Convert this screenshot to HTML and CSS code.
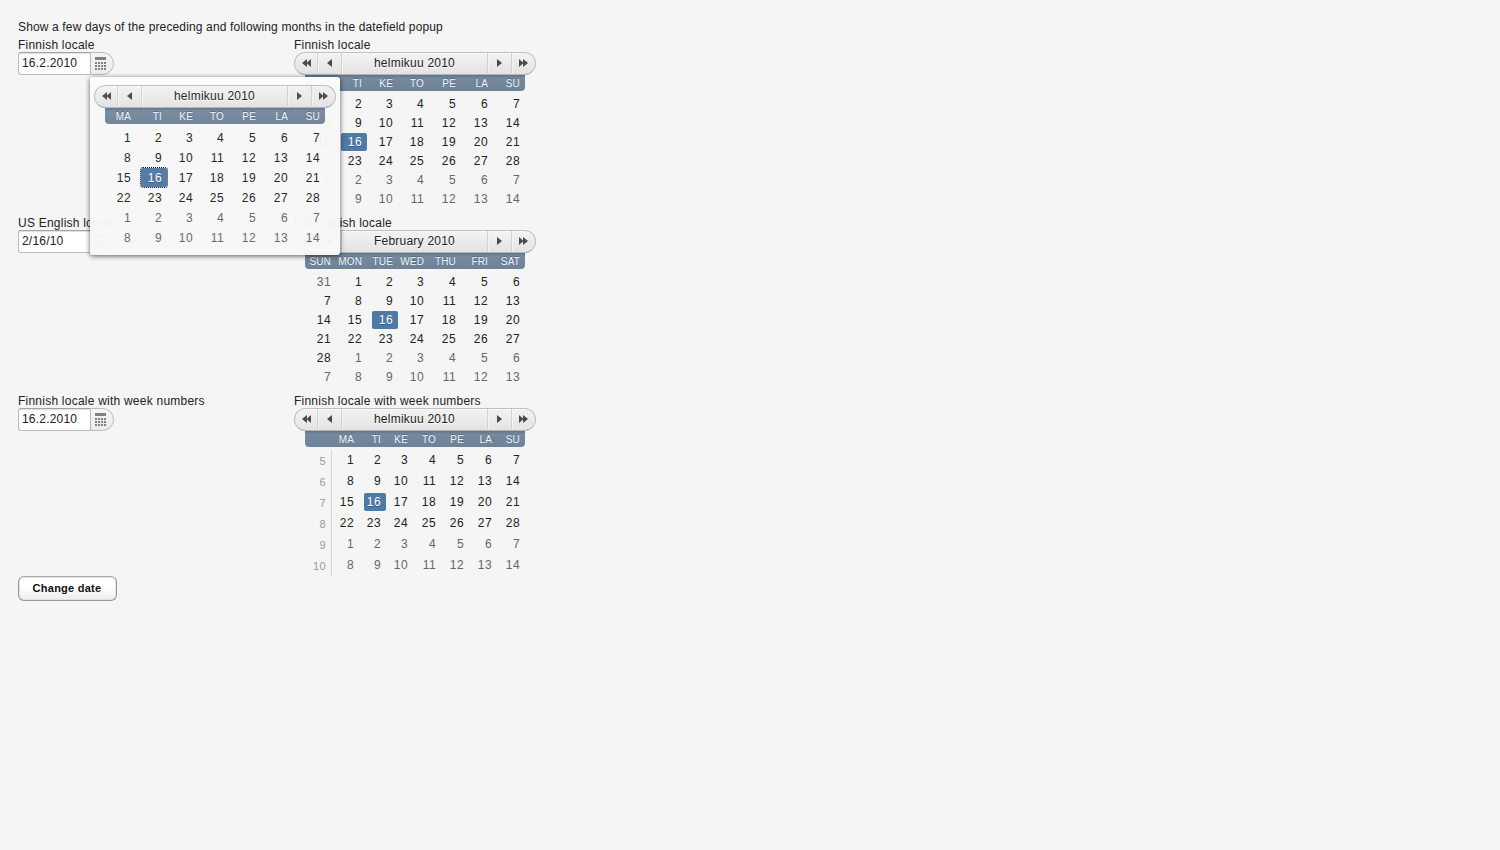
FILE: index.html
```
<!DOCTYPE html>
<html lang="en">
<head>
<meta charset="utf-8">
<title>Date fields</title>
<link rel="stylesheet" href="styles.css">
</head>
<body>
<svg class="sprites" width="0" height="0" aria-hidden="true">
  <symbol id="left" viewBox="0 0 5 8"><path d="M5 0V8L0 4Z"/></symbol>
  <symbol id="left2" viewBox="0 0 9 8"><path d="M5 0V8L0 4ZM9 0V8L4.5 4Z"/></symbol>
  <symbol id="right" viewBox="0 0 5 8"><path d="M0 0V8L5 4Z"/></symbol>
  <symbol id="right2" viewBox="0 0 9 8"><path d="M0 0V8L4.5 4ZM4 0V8L9 4Z"/></symbol>
  <symbol id="grid" viewBox="0 0 11 14"><path d="M0 0H11V3H0ZM0 5h2v2H0zM3 5h2v2H3zM6 5h2v2H6zM9 5h2v2H9zM0 8h2v2H0zM3 8h2v2H3zM6 8h2v2H6zM9 8h2v2H9zM0 11h2v2H0zM3 11h2v2H3zM6 11h2v2H6zM9 11h2v2H9z"/></symbol>
</svg>
<main class="page">
  <div class="intro">Show a few days of the preceding and following months in the datefield popup</div>
  <div class="layout">
    <section class="item"><div class="caption">Finnish locale</div><div class="field"><span class="value">16.2.2010</span><span class="pick"><svg width="11" height="14"><use href="#grid"/></svg></span></div></section>
    <section class="item"><div class="caption">Finnish locale</div><div class="calendar" data-locale="fi"></div></section>
    <section class="item"><div class="caption">US English locale</div><div class="field"><span class="value">2/16/10</span><span class="pick"><svg width="11" height="14"><use href="#grid"/></svg></span></div></section>
    <section class="item"><div class="caption">US English locale</div><div class="calendar" data-locale="en"></div></section>
    <section class="item"><div class="caption">Finnish locale with week numbers</div><div class="field"><span class="value">16.2.2010</span><span class="pick"><svg width="11" height="14"><use href="#grid"/></svg></span></div></section>
    <section class="item"><div class="caption">Finnish locale with week numbers</div><div class="calendar weeks" data-locale="fi"></div></section>
  </div>
  <button class="button">Change date</button>
</main>
<div class="popup"><div class="calendar" data-locale="fi"></div></div>
<script src="calendar.js"></script>
</body>
</html>
```
FILE: styles.css
```
body { margin: 0; background: #f5f5f5; color: #222; font: 12px/18px "Liberation Sans", Arial, sans-serif; letter-spacing: 0.23px; }
.sprites { position: absolute; }
.page { padding: 18px; }
.intro, .caption { height: 18px; white-space: nowrap; }
.intro { letter-spacing: 0.14px; }
.layout { display: grid; grid-template-columns: 276px 242px; grid-template-rows: repeat(3, 178px); margin-bottom: 6px; }
.caption { height: 16px; }
.field { display: flex; width: 96px; height: 23px; }
.value { box-sizing: border-box; width: 72px; height: 23px; padding-left: 3px; line-height: 20px; background: #fff; border: 1px solid #bcbcbc; border-top-color: #a3a3a3; border-right: 0; border-radius: 3px 0 0 3px; box-shadow: inset 0 1px 1px #ddd; letter-spacing: 0.2px; }
.pick { box-sizing: border-box; width: 24px; height: 23px; padding: 4px 0 0 4px; border: 1px solid #b9bbba; border-radius: 0 12px 12px 0; background: linear-gradient(#f5f5f5, #ececec); line-height: 0; fill: #7b8184; }
.pick svg { display: block; }
.calendar { width: 242px; }
.bar { box-sizing: border-box; display: grid; grid-template-columns: 22px 24px 1fr 24px 24px; height: 23px; border: 1px solid #c0c0c0; border-bottom-color: #b4b4b4; border-radius: 12px; background: linear-gradient(#f3f3f3, #e3e3e3); box-shadow: inset 0 1px #f8f8f8; text-align: center; line-height: 20px; letter-spacing: 0.23px; text-shadow: 0 1px #fff; }
.bar > * + * { border-left: 1px solid #d2d2d2; box-shadow: inset 1px 0 #f3f3f3; }
.nav { display: flex; height: 20px; align-items: center; justify-content: center; fill: #4a4a4a; }
.days { display: grid; grid-template-columns: repeat(4, 31px) repeat(3, 32px); margin: 0 11px; height: 16px; background: linear-gradient(#5e7388, #76899e 3px, #6d8298); border-radius: 0 0 4px 4px; color: #f3f6f8; font-size: 10px; line-height: 18px; text-align: right; text-shadow: 0 -1px #536a80; letter-spacing: 0.15px; }
.days span { padding-right: 5px; white-space: nowrap; }
.dates { display: grid; grid-template-columns: repeat(4, 31px) repeat(3, 32px); grid-auto-rows: 19px; margin: 4px 11px 0; line-height: 18px; text-align: right; letter-spacing: 0.4px; }
.date { height: 18px; margin-left: 5px; padding-right: 5px; }
.outside { color: #666; }
.selected { background: #4e7aa5; border-radius: 2px; color: #fff; text-shadow: 0 1px #365a7d; }
.weeks .days, .weeks .dates { grid-template-columns: repeat(4, 27px) repeat(4, 28px); }
.weeks .dates { grid-auto-rows: 21px; margin-top: 3px; }
.weeks .date { margin-top: 1px; }
.week { padding: 2px 5px 0 0; border-right: 1px solid #d8d8d8; color: #999; font-size: 11px; }
.button { box-sizing: border-box; display: block; width: 99px; height: 25px; padding: 0 1px 1px 0; border: 1px solid #999; border-top-color: #aaa; border-radius: 6px; background: linear-gradient(#fff 45%, #ededed); box-shadow: inset 0 0 0 1px #e2e2e2; color: #111; font: bold 11px "Liberation Sans", Arial, sans-serif; letter-spacing: 0.25px; }
.popup { position: absolute; left: 90px; top: 77px; box-sizing: border-box; width: 250px; height: 178px; padding: 8px 4px; border-radius: 3px; background: linear-gradient(#fff, #f8f8f8 30px); opacity: 0.97; box-shadow: 0 1px 5px rgba(0,0,0,.65); }
.popup .bar { line-height: 21px; }
.popup .dates { grid-auto-rows: 20px; }
.popup .date { height: 19px; line-height: 20px; }
.popup .selected { outline: 1px dotted #000; }
```
FILE: calendar.js
```
const locales = {
  fi: { title: "helmikuu 2010", days: ["MA", "TI", "KE", "TO", "PE", "LA", "SU"], start: 1 },
  en: { title: "February 2010", days: ["SUN", "MON", "TUE", "WED", "THU", "FRI", "SAT"], start: 0 }
};
const icon = (name, width) => `<span class="nav"><svg width="${width}" height="8"><use href="#${name}"/></svg></span>`;

document.querySelectorAll(".calendar").forEach((calendar) => {
  const locale = locales[calendar.dataset.locale];
  const weeks = calendar.classList.contains("weeks");
  let cells = "";
  for (let i = 0; i < 42; i++) {
    if (weeks && i % 7 === 0) cells += `<span class="week">${5 + i / 7}</span>`;
    const n = locale.start + i;
    const day = n < 1 ? 31 : n > 28 ? n - 28 : n;
    const state = n < 1 || n > 28 ? " outside" : n === 16 ? " selected" : "";
    cells += `<span class="date${state}">${day}</span>`;
  }
  calendar.innerHTML = `<div class="bar">${icon("left2", 9)}${icon("left", 5)}<span>${locale.title}</span>${icon("right", 5)}${icon("right2", 9)}</div>
    <div class="days">${weeks ? "<span></span>" : ""}${locale.days.map((d) => `<span>${d}</span>`).join("")}</div>
    <div class="dates">${cells}</div>`;
});
```
